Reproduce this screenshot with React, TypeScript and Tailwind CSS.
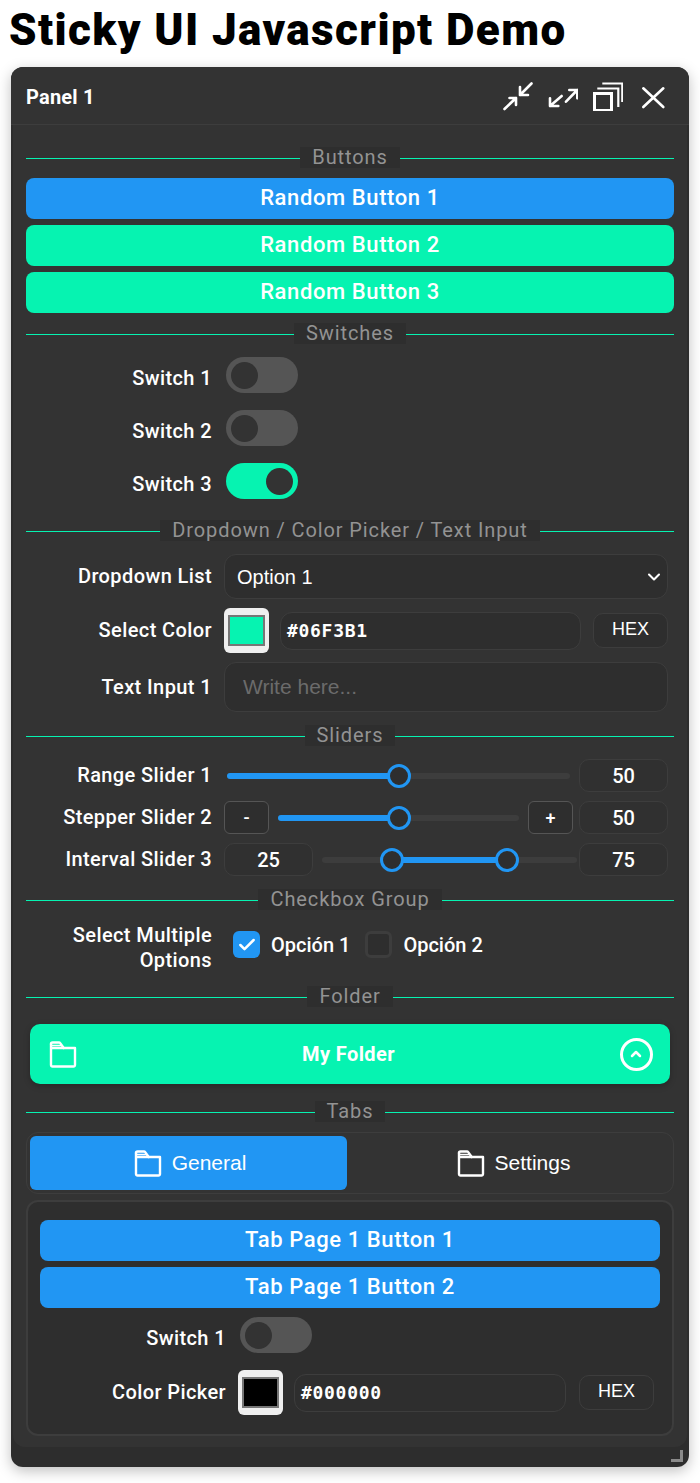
import { ReactNode } from "react";
import { ChevronDown, Check } from "lucide-react";

const din = "font-['Roboto',sans-serif]";

const Divider = ({ label, className = "" }: { label: string; className?: string }) => (
  <div className={`flex h-[21px] items-center ${className}`}>
    <div className="mt-px h-px flex-1 bg-[#06F3B1]" />
    <span className="flex h-[21px] items-center bg-[#2e2e2e] px-3 pb-px text-[20px] leading-none tracking-[0.9px] text-[#939393]">{label}</span>
    <div className="mt-px h-px flex-1 bg-[#06F3B1]" />
  </div>
);

const Btn = ({ label, color }: { label: string; color: string }) => (
  <button className={`h-[41px] w-full rounded-lg pb-[2px] text-[22px] font-medium leading-none tracking-[0.6px] text-white ${color}`}>{label}</button>
);

const Row = ({ label, children, className = "", labelClass = "" }: { label: ReactNode; children: ReactNode; className?: string; labelClass?: string }) => (
  <div className={`flex items-center pr-[6px] ${className}`}>
    <div className={`mr-3 w-[186px] shrink-0 text-right text-[20px] font-medium leading-[25px] tracking-[0.4px] text-white ${labelClass}`}>{label}</div>
    {children}
  </div>
);

const Switch = () => (
  <div className="ml-[2px] flex h-9 w-[72px] items-center rounded-full bg-[#555555] px-[5px]">
    <div className="h-[27px] w-[27px] rounded-full bg-[#333333]" />
  </div>
);

const SwitchOn = () => (
  <div className="ml-[2px] flex h-9 w-[72px] items-center justify-end rounded-full bg-[#06F3B1] px-[5px]">
    <div className="h-[27px] w-[27px] rounded-full bg-[#333333]" />
  </div>
);

const ColorField = ({ value, swatch, inputWidth }: { value: string; swatch: string; inputWidth: string }) => (
  <div className="flex flex-1 items-center">
    <div className="flex h-[45px] w-[45px] shrink-0 items-center justify-center rounded-md bg-[#efefef]">
      <div className={`h-[31px] w-[37px] border-2 border-[#767676] ${swatch}`} />
    </div>
    <div className={`ml-[11px] flex h-[38px] items-center rounded-xl border border-[#3d3d3d] bg-[#2e2e2e] pl-[6px] font-['DejaVu_Sans_Mono',monospace] text-[18px] font-bold tracking-[0.7px] text-white ${inputWidth}`}>{value}</div>
    <div className="ml-auto flex h-[35px] w-[75px] items-center justify-center rounded-[10px] border border-[#3d3d3d] bg-[#2e2e2e] pb-[2px] font-['Liberation_Sans',sans-serif] text-[18px] text-white">HEX</div>
  </div>
);

const ValueBox = ({ value, className = "" }: { value: string; className?: string }) => (
  <div className={`flex h-[33px] w-[89px] shrink-0 items-center justify-center rounded-[10px] border border-[#3d3d3d] bg-[#303030] text-[20px] font-medium text-white ${className}`}>{value}</div>
);

const Thumb = ({ pos }: { pos: string }) => (
  <div className={`absolute top-1/2 h-6 w-6 -translate-x-1/2 -translate-y-1/2 rounded-full border-[3px] border-[#2196F3] bg-[#2e2e2e] ${pos}`} />
);

const StepBtn = ({ label }: { label: string }) => (
  <div className="flex h-[33px] w-[45px] shrink-0 items-center justify-center rounded-md border border-[#555555] bg-[#2e2e2e] text-[18px] font-medium text-white">{label}</div>
);

const FolderIcon = ({ className = "" }: { className?: string }) => (
  <svg viewBox="0 0 28 28" className={className} fill="none" stroke="currentColor" strokeWidth="2.4" strokeLinejoin="round" strokeLinecap="round">
    <path d="M2 4v21a1.500 1.500 0 0 0 1.500 1.500h21a1.500 1.500 0 0 0 1.500-1.500V8H2" />
    <path d="M2 4A1.500 1.500 0 0 1 3.500 2.500h6.500a1.500 1.500 0 0 1 1.200 .6l3.500 4.900" />
    <path d="M2 5.500h10" strokeWidth="1.600" />
  </svg>
);

const HeaderIcons = () => (
  <div className="flex items-center gap-[15px] text-white">
    <svg viewBox="0 0 30 30" className="h-[30px] w-[30px]" fill="none" stroke="currentColor" strokeWidth="2.600" strokeLinecap="round" strokeLinejoin="round">
      <path d="M1.500 28L13 17M6.500 17H13v7" />
      <path d="M28.500 2.500L17 14M17 6v8h8" />
    </svg>
    <svg viewBox="0 0 30 30" className="h-[30px] w-[30px]" fill="none" stroke="currentColor" strokeWidth="2.600" strokeLinecap="round" strokeLinejoin="round">
      <path d="M2 25l11.700-10M2 17.300V25h8.300" />
      <path d="M29.300 9L18 20.700M21.300 9h8v8.300" />
    </svg>
    <svg viewBox="0 0 30 30" className="h-[30px] w-[30px]" fill="none" stroke="currentColor">
      <rect x="1.500" y="12.500" width="17" height="17" strokeWidth="3" />
      <path d="M4.300 7.500h21V26" strokeWidth="2.200" />
      <path d="M9.300 2.500h20V21" strokeWidth="2.200" />
    </svg>
    <svg viewBox="0 0 30 30" className="h-[30px] w-[30px]" fill="none" stroke="currentColor" strokeWidth="2.600" strokeLinecap="round">
      <path d="M5.300 7.300l20 18.700M25.300 7.300L5.300 26" />
    </svg>
  </div>
);

export default function App() {
  return (
    <div className={`h-[1483px] w-[700px] overflow-hidden bg-white ${din}`}>
      <h1 className="h-[67px] pl-[9px] pt-[3px] text-[44px] font-black leading-[54px] tracking-[1.4px] text-black">Sticky UI Javascript Demo</h1>
      <div className="mx-[11px] h-[1400px] overflow-hidden rounded-xl bg-[#2d2d2d] shadow-[0_4px_14px_rgba(0,0,0,0.25)]">
        <div className="flex h-[58px] items-center justify-between border-b border-[#3d3d3d] bg-[#333333] pl-[15px] pr-[21px]">
          <span className="pt-[2px] text-[20px] font-bold tracking-[0.2px] text-white">Panel 1</span>
          <HeaderIcons />
        </div>
        <div className="mx-[2px] h-[1322px] rounded-b-xl bg-[#333333] px-[13px] pt-[22px]">
          <Divider label="Buttons" />
          <div className="mt-[10px] flex flex-col gap-[6px]">
            <Btn label="Random Button 1" color="bg-[#2196F3]" />
            <Btn label="Random Button 2" color="bg-[#06F3B1]" />
            <Btn label="Random Button 3" color="bg-[#06F3B1]" />
          </div>

          <Divider label="Switches" className="mt-[10px]" />
          <div className="mt-[13px] flex flex-col gap-[17px]">
            <Row label="Switch 1" labelClass="pt-[7px]"><Switch /></Row>
            <Row label="Switch 2" labelClass="pt-[7px]"><Switch /></Row>
            <Row label="Switch 3" labelClass="pt-[7px]"><SwitchOn /></Row>
          </div>

          <Divider label="Dropdown / Color Picker / Text Input" className="mt-[21px]" />
          <Row label="Dropdown List" className="mt-[13px]">
            <div className="flex h-[45px] flex-1 items-center justify-between rounded-xl border border-[#3d3d3d] bg-[#2e2e2e] pl-[12px] pr-[3px] font-['Liberation_Sans',sans-serif] text-[20px] text-white">
              Option 1
              <ChevronDown className="h-5 w-5" strokeWidth={2.5} />
            </div>
          </Row>
          <Row label="Select Color" className="mt-[9px]">
            <ColorField value="#06F3B1" swatch="bg-[#06F3B1]" inputWidth="w-[301px]" />
          </Row>
          <Row label="Text Input 1" className="mt-[9px]">
            <div className="flex h-[50px] flex-1 items-center rounded-xl border border-[#3d3d3d] bg-[#2e2e2e] pl-[18px] font-['Liberation_Sans',sans-serif] text-[21px] text-[#6b6b6b]">Write here...</div>
          </Row>

          <Divider label="Sliders" className="mt-[13px]" />
          <Row label="Range Slider 1" className="mt-[13px]">
            <div className="relative ml-[3px] h-[6px] w-[343px] rounded-full bg-[#3d3d3d]">
              <div className="h-full w-1/2 rounded-full bg-[#2196F3]" />
              <Thumb pos="left-1/2" />
            </div>
            <ValueBox value="50" className="ml-auto" />
          </Row>
          <Row label="Stepper Slider 2" className="mt-[9px]">
            <StepBtn label="-" />
            <div className="relative ml-[9px] h-[6px] w-[241px] rounded-full bg-[#3d3d3d]">
              <div className="h-full w-1/2 rounded-full bg-[#2196F3]" />
              <Thumb pos="left-1/2" />
            </div>
            <div className="ml-[9px]"><StepBtn label="+" /></div>
            <ValueBox value="50" className="ml-auto" />
          </Row>
          <Row label="Interval Slider 3" className="mt-[9px]">
            <ValueBox value="25" />
            <div className="relative ml-[9px] h-[6px] w-[255px] rounded-full bg-[#3d3d3d]">
              <div className="absolute left-[27.5%] h-full w-[45%] bg-[#2196F3]" />
              <Thumb pos="left-[27.5%]" />
              <Thumb pos="left-[72.5%]" />
            </div>
            <ValueBox value="75" className="ml-auto" />
          </Row>

          <Divider label="Checkbox Group" className="mt-[13px]" />
          <Row label={<>Select Multiple<br />Options</>} className="mt-[13px]">
            <div className="mb-[7px] flex items-center">
              <div className="ml-[9px] flex h-[27px] w-[27px] items-center justify-center rounded-md bg-[#2196F3]">
                <Check className="h-5 w-5 text-white" strokeWidth={3} />
              </div>
              <span className="ml-[11px] text-[20px] font-medium text-white">Opción 1</span>
              <div className="ml-[15px] h-[27px] w-[27px] rounded-md border-[3px] border-[#3d3d3d] bg-[#2e2e2e]" />
              <span className="ml-[11px] text-[20px] font-medium text-white">Opción 2</span>
            </div>
          </Row>

          <Divider label="Folder" className="mt-[13px]" />
          <div className="mx-1 mt-[17px] flex h-[60px] items-center justify-between rounded-[10px] bg-[#06F3B1] pl-[19px] pr-[17px] text-white shadow-[0_2px_6px_rgba(0,0,0,0.25)]">
            <FolderIcon className="h-[28px] w-[28px]" />
            <span className="text-[20px] font-bold tracking-[0.4px]">My Folder</span>
            <div className="flex h-[33px] w-[33px] items-center justify-center rounded-full border-[3px] border-white">
              <svg viewBox="0 0 12 8" className="h-2 w-3" fill="none" stroke="currentColor" strokeWidth="2.500" strokeLinecap="round" strokeLinejoin="round">
                <path d="M2 6l4-4 4 4" />
              </svg>
            </div>
          </div>

          <Divider label="Tabs" className="mt-[17px]" />
          <div className="mt-[10px] flex h-[62px] rounded-xl border border-[#3d3d3d] p-[3px] font-['Liberation_Sans',sans-serif] text-[21px] text-white">
            <div className="flex h-[54px] w-[317px] items-center justify-center gap-[10px] rounded-md bg-[#2196F3] pl-[3px]">
              <FolderIcon className="h-[28px] w-[28px]" />
              General
            </div>
            <div className="flex flex-1 items-center justify-center gap-[10px] pl-[10px]">
              <FolderIcon className="h-[28px] w-[28px]" />
              Settings
            </div>
          </div>
          <div className="mt-[6px] h-[236px] rounded-xl border-2 border-[#3d3d3d] bg-[#2e2e2e] px-3 pt-[18px]">
            <div className="flex flex-col gap-[6px]">
              <Btn label="Tab Page 1 Button 1" color="bg-[#2196F3]" />
              <Btn label="Tab Page 1 Button 2" color="bg-[#2196F3]" />
            </div>
            <Row label="Switch 1" labelClass="pt-[6px]" className="mt-[9px]"><Switch /></Row>
            <Row label="Color Picker" className="mt-[17px]">
              <ColorField value="#000000" swatch="bg-black" inputWidth="w-[272px]" />
            </Row>
          </div>
        </div>
        <div className="flex h-5 justify-end pr-[6px] pt-[3px]">
          <div className="h-3 w-3 border-b-[3px] border-r-[3px] border-[#8a8a8a]" />
        </div>
      </div>
    </div>
  );
}
